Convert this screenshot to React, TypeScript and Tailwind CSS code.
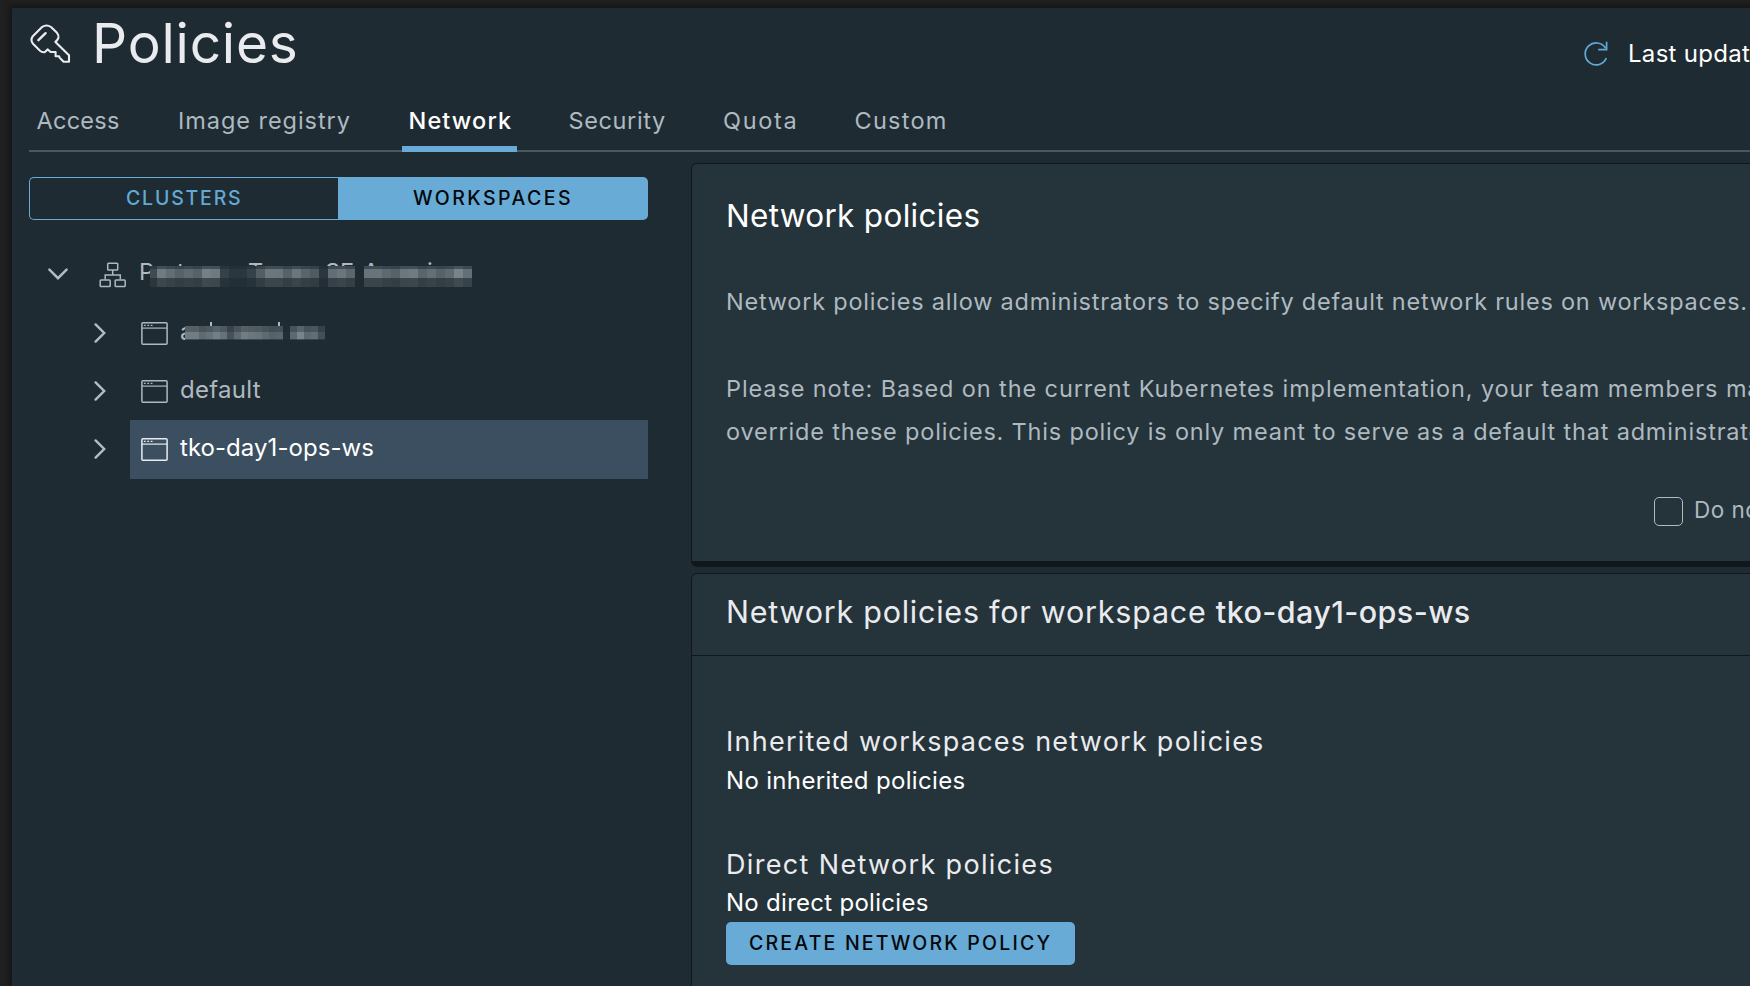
import React from "react";

const tabs = [
  { label: "Access", slot: "w-[141.5px]", text: "tracking-[0.27px]" },
  { label: "Image registry", slot: "w-[230.5px]", text: "tracking-[0.95px]" },
  { label: "Network", slot: "w-[160px]", text: "tracking-[1.13px]", active: true },
  { label: "Security", slot: "w-[154.5px]", text: "tracking-[0.62px]" },
  { label: "Quota", slot: "w-[131.5px]", text: "tracking-[1.7px]" },
  { label: "Custom", slot: "w-[110px]", text: "tracking-[1.25px]" },
];

function KeyIcon() {
  return (
    <svg viewBox="28 22 44 44" className="h-[44px] w-[44px]" fill="none" stroke="#eaebee" strokeWidth="2.1" strokeLinejoin="round">
      <path d="M44.6 52.2 Q42 52.6 40 50.8 L33 43.8 Q30 40.3 32.8 36.2 L42.3 26.8 Q46.6 24 51 27 L57 32.8 Q59.2 35.5 58.4 38 Q57.6 40 55.4 41.9 L69 55.3 V61.8 H63.6 L59.6 57.6 L59.2 56.2 H55.6 V52 H50.6 L47.8 49.4 Z" />
      <path d="M38.4 40.2 L45.6 33.2" strokeWidth="2.4" strokeLinecap="round" />
    </svg>
  );
}

function RefreshIcon() {
  return (
    <svg viewBox="0 0 26 26" className="h-[26px] w-[26px]" fill="none" stroke="#62a9d4" strokeWidth="1.7">
      <path d="M23.3 17.2 A11 11 0 1 1 22.6 7.2" />
      <path d="M23.6 0.8 V8.7 H15.2" />
    </svg>
  );
}

function OrgIcon() {
  return (
    <svg viewBox="0 0 28 26" className="h-[26px] w-[28px]" fill="none" stroke="#aeb9bf" strokeWidth="1.5">
      <rect x="8.7" y="1.2" width="10" height="6.8" rx="0.8" />
      <rect x="1.2" y="18" width="10" height="6.6" rx="0.8" />
      <rect x="16.2" y="18" width="10" height="6.6" rx="0.8" />
      <path d="M13.7 8 V12.9 M6.2 17.6 V12.9 H21.3 V17.6" />
    </svg>
  );
}

function WindowIcon({ color }: { color: string }) {
  return (
    <svg viewBox="0 0 27 23" className="h-[23px] w-[27px] shrink-0" fill="none" stroke={color} strokeWidth="1.5">
      <rect x="0.9" y="0.8" width="25.2" height="21.4" rx="1" />
      <path d="M1 6.1 H26" strokeWidth="1.2" />
      <path d="M2.9 3.4 H11.5" strokeWidth="1.3" strokeDasharray="1.8 1.6" />
    </svg>
  );
}

function Chevron({ down = false }: { down?: boolean }) {
  return down ? (
    <svg viewBox="0 0 20 12" className="h-[12px] w-[20px]" fill="none" stroke="#b3bec4" strokeWidth="2.4" strokeLinecap="round">
      <path d="M1.4 1.6 L10 10.2 L18.6 1.6" />
    </svg>
  ) : (
    <svg viewBox="0 0 12 20" className="h-[20px] w-[12px]" fill="none" stroke="#b3bec4" strokeWidth="2.4" strokeLinecap="round">
      <path d="M1.6 1.4 L10.2 10 L1.6 18.6" />
    </svg>
  );
}

const orgShades = [
  "#3f4a51", "#707b81", "#626d74", "#566168", "#5f6a70", "#566168", "#748086", "#6f7a80", "#36424a", "#2b363e", "#2b363e", "#36424a",
  "#525d64", "#6c777d", "#6b767c", "#566168", "#6b767c", "#59646b", "#4f5a61", "#2b363e", "#636e74", "#6b767c", "#5a656c", "#1f2b32",
  "#69747a", "#69747a", "#5d686f", "#566168", "#6d787e", "#707b81", "#59646b", "#636e75", "#566168", "#5f6a70", "#77838a", "#636e75",
];
const wsShades = [
  "#727d83", "#727d83", "#5f6a70", "#66717a", "#747f85", "#66717a", "#465158", "#5f6a70", "#727d83", "#6c777d",
  "#69747a", "#5f6a70", "#566168", "#59646b", "#222d35", "#5d686f", "#78838a", "#5d686f", "#626d74", "#444f56",
];

function OrgMosaic() {
  const row = (h: string, fade: string) => (
    <div className={`flex ${h}`}>
      {orgShades.map((c, i) => (
        <div key={i} className={i === 0 ? "w-[7px] bg-[#1f2b32]" : "w-[9px] bg-[#1f2b32]"}>
          <div className={`h-full ${fade}`} style={{ backgroundColor: c }} />
        </div>
      ))}
    </div>
  );
  return (
    <div className="absolute top-[21px] left-[11px]">
      {row("h-[3px]", "opacity-45")}
      {row("h-[9px]", "opacity-100")}
      {row("h-[9px]", "opacity-35")}
    </div>
  );
}

function WorkspaceMosaic() {
  const row = (h: string, fade: string) => (
    <div className={`flex ${h}`}>
      {wsShades.map((c, i) => (
        <div key={i} className="w-[7px] bg-[#1f2b32]">
          <div className={`h-full ${fade}`} style={{ backgroundColor: c }} />
        </div>
      ))}
    </div>
  );
  return (
    <div className="absolute top-[22px] left-[5px]">
      {row("h-[6px]", "opacity-65")}
      {row("h-[7px]", "opacity-100")}
      {row("h-[1px]", "opacity-40")}
    </div>
  );
}

export default function App() {
  return (
    <div className="h-[986px] w-[1750px] overflow-hidden bg-[#202020] pt-[8px] pl-[12px] font-['Inter',sans-serif] text-[#aeb9c0]">
      <div className="h-[978px] overflow-hidden bg-[#1f2b32] shadow-[0_0_7px_2px_rgba(0,0,0,0.45)]">
        <header className="flex h-[84px] whitespace-nowrap">
          <div className="mt-[14px] ml-[16px]"><KeyIcon /></div>
          <h1 className="mt-[3px] ml-[20px] text-[55px] leading-[64px] font-normal tracking-[0.8px] text-[#eaebee]">Policies</h1>
          <div className="ml-auto flex w-[167px] shrink-0 overflow-hidden">
            <div className="mt-[33px]"><RefreshIcon /></div>
            <span className="mt-[25px] ml-[19px] text-[24px] leading-[41px] tracking-[0.3px] text-white">Last updated</span>
          </div>
        </header>

        <nav className="ml-[17px] flex h-[60px] border-b-2 border-[#4b5763] pl-[1px] whitespace-nowrap">
          {tabs.map((t) => (
            <div key={t.label} className={`${t.slot} shrink-0`}>
              <div
                className={`${t.text} h-[60px] pl-[6.5px] text-[23.5px] leading-[57px] ${
                  t.active ? "w-[115px] border-b-[6px] border-[#67abd6] font-medium text-white" : ""
                }`}
              >
                {t.label}
              </div>
            </div>
          ))}
        </nav>

        <div className="flex h-[834px]">
          <aside className="ml-[17px] w-[619px] shrink-0 pt-[25px]">
            <div className="flex h-[43px] text-[19.5px] leading-[42px] font-medium">
              <div className="w-[309px] rounded-l-[5px] border border-[#67abd6] border-r-0 pl-[96px] leading-[41px] tracking-[1.8px] text-[#62a9d4]">CLUSTERS</div>
              <div className="w-[310px] rounded-r-[5px] bg-[#67abd6] pl-[75px] leading-[43px] tracking-[2.45px] text-[#04080b]">WORKSPACES</div>
            </div>

            <div className="mt-[25px] flex h-[59px] items-start">
              <div className="mt-[23px] ml-[19px]"><Chevron down /></div>
              <div className="mt-[17px] ml-[31px]"><OrgIcon /></div>
              <div className="relative ml-[12px] h-[58px] text-[23.5px] leading-[54px]">
                <span className="absolute top-0 left-0">P</span>
                <span className="absolute top-0 left-[38px]">t</span>
                <span className="absolute top-0 left-[109px]">T</span>
                <span className="absolute top-0 left-[186px]">SE</span>
                <span className="absolute top-0 left-[224px]">A</span>
                <span className="absolute top-0 left-[288px]">i</span>
                <OrgMosaic />
              </div>
            </div>

            <div className="flex h-[58px]">
              <div className="mt-[19px] ml-[65px] w-[36px]"><Chevron /></div>
              <div className="flex flex-1 pl-[11px]">
                <div className="mt-[18px]"><WindowIcon color="#aeb9bf" /></div>
                <div className="relative ml-[12px] text-[24px] leading-[55px]">
                  <span>a</span>
                  <span className="absolute top-[18px] left-[30px] h-[6px] w-[2px] bg-[#aeb9bf]" />
                  <span className="absolute top-[18px] left-[98px] h-[6px] w-[2px] bg-[#aeb9bf]" />
                  <WorkspaceMosaic />
                </div>
              </div>
            </div>

            <div className="flex h-[58px]">
              <div className="mt-[19px] ml-[65px] w-[36px]"><Chevron /></div>
              <div className="flex flex-1 pl-[11px]">
                <div className="mt-[18px]"><WindowIcon color="#aeb9bf" /></div>
                <span className="ml-[12px] text-[24px] leading-[55px] tracking-[0.3px]">default</span>
              </div>
            </div>

            <div className="flex h-[59px]">
              <div className="mt-[19px] ml-[65px] w-[36px]"><Chevron /></div>
              <div className="flex flex-1 bg-[#3b4f60] pl-[11px]">
                <div className="mt-[18px]"><WindowIcon color="#e8ecef" /></div>
                <span className="ml-[12px] text-[24px] leading-[55px] tracking-[0.05px] text-white">tko-day1-ops-ws</span>
              </div>
            </div>
          </aside>

          <main className="ml-[43px] w-[1100px] shrink-0 pt-[11px] whitespace-nowrap">
            <section className="h-[404px] rounded-[6px] border border-b-[6px] border-[#11181c] bg-[#25333a] pl-[34px]">
              <h2 className="mt-[32px] text-[31.5px] leading-[40px] tracking-[0.3px] text-white">Network policies</h2>
              <p className="mt-[44px] text-[23.5px] leading-[43px] tracking-[0.77px]">
                Network policies allow administrators to specify default network rules on workspaces.
              </p>
              <p className="mt-[44px] text-[23.5px] leading-[43px] tracking-[0.81px]">
                <span className="tracking-[0.9px]">Please note: Based on the current Kubernetes implementation, your team members may</span>
                <br />
                override these policies. This policy is only meant to serve as a default that administrators
              </p>
              <label className="mt-[44px] ml-[928px] flex">
                <span className="h-[29px] w-[29px] rounded-[5px] border border-[#aeb9c0]" />
                <span className="ml-[11px] text-[22.5px] leading-[26px] tracking-[0.5px]">Do not</span>
              </label>
            </section>

            <section className="mt-[6px] h-[430px] rounded-t-[6px] border border-[#11181c] bg-[#25333a]">
              <h2 className="h-[82px] border-b border-[#11181c] pl-[34px] text-[30.5px] leading-[75px] tracking-[0.76px] text-[#eaebee]">
                Network policies for workspace <span className="font-medium tracking-[0.4px]">tko-day1-ops-ws</span>
              </h2>
              <div className="pt-[66px] pl-[34px]">
                <h3 className="text-[27px] leading-[40px] tracking-[1.25px] text-[#eaebee]">Inherited workspaces network policies</h3>
                <p className="text-[24px] leading-[38px] tracking-[0.33px] text-white">No inherited policies</p>
                <h3 className="mt-[45px] text-[27px] leading-[40px] tracking-[1.34px] text-[#eaebee]">Direct Network policies</h3>
                <p className="text-[24px] leading-[36px] tracking-[0.28px] text-white">No direct policies</p>
                <button className="mt-[1px] block h-[43px] w-[349px] rounded-[5px] bg-[#67abd6] pl-[23px] text-left text-[19.5px] leading-[41px] font-medium tracking-[2.2px] text-[#04080b]">
                  CREATE NETWORK POLICY
                </button>
              </div>
            </section>
          </main>
        </div>
      </div>
    </div>
  );
}
